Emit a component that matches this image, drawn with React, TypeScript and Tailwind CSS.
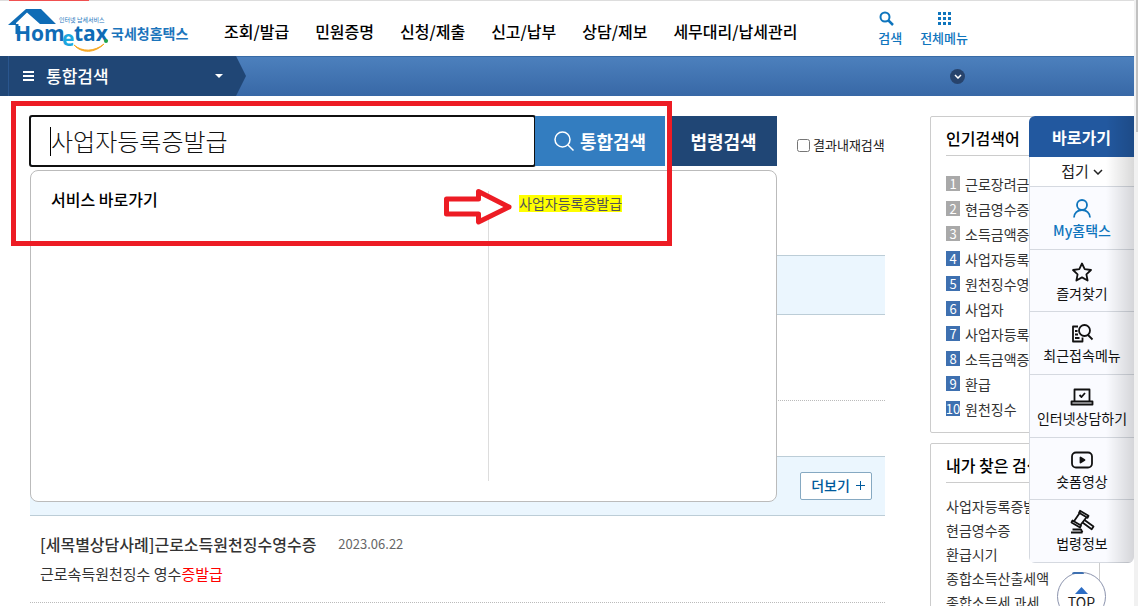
import type { ReactNode } from "react";

interface QuickItem {
  label: string;
  icon: ReactNode;
  active?: boolean;
}

const menus = ["조회/발급", "민원증명", "신청/제출", "신고/납부", "상담/제보", "세무대리/납세관리"];

const popularKeywords = [
  "근로장려금",
  "현금영수증",
  "소득금액증명",
  "사업자등록증",
  "원천징수영수증",
  "사업자",
  "사업자등록",
  "소득금액증명원",
  "환급",
  "원천징수",
];

const myKeywords = ["사업자등록증발급", "현금영수증", "환급시기", "종합소득산출세액", "종합소득세 과세"];

const quickItems: QuickItem[] = [
  {
    label: "My홈택스",
    active: true,
    icon: (
      <>
        <circle cx="12" cy="8" r="5" />
        <path d="M4 20.500c0-4.500 3.500-7.500 8-7.500s8 3 8 7.500" />
      </>
    ),
  },
  {
    label: "즐겨찾기",
    icon: <path d="M12 3.500l2.700 5.700 6.300.8-4.600 4.300 1.200 6.200-5.600-3.100-5.600 3.100 1.200-6.200L3 10l6.300-.8z" />,
  },
  {
    label: "최근접속메뉴",
    icon: (
      <>
        <path d="M8 4.500H3v15h9.500v-4M5 9h2.500M5 12.500h3M5 16h4.500" />
        <circle cx="14.500" cy="8.500" r="5.500" />
        <path d="M18 13l4.500 4.500" />
      </>
    ),
  },
  {
    label: "인터넷상담하기",
    icon: (
      <>
        <path d="M4.500 15.500v-11h15v11M1.500 16.500h21v3h-21z" />
        <path d="M9.500 10l2 2 3.500-4" />
      </>
    ),
  },
  {
    label: "숏폼영상",
    icon: (
      <>
        <rect x="2" y="4.500" width="20" height="15" rx="4" />
        <path d="M10.500 9.500v5l4-2.500z" fill="currentColor" />
      </>
    ),
  },
  {
    label: "법령정보",
    icon: (
      <>
        <path d="M10 0.800l8.500 5-1 2-8.500-5zM2.500 10.500l8.500 5-1 2-8.500-5z" />
        <path d="M9.500 3.200L4 11.300M16.500 7.300L10.500 15" />
        <path d="M14.500 10l9 6.500-1.800 2.800-9.200-6.800M1 22.500h11.500M2.500 19.500h8.500l1.500 3" />
      </>
    ),
  },
];

function Logo() {
  return (
    <svg className="h-11 w-[182px]" viewBox="0 0 182 44" role="img" aria-label="홈택스">
      <path d="M0 17L18 1h15l15 15H32L19 4.500 8 15v2z" fill="#0f6cb6" />
      <path d="M9 16v10" stroke="#0f6cb6" strokeWidth="3" />
      <text x="51" y="14" fontSize="6" fill="#1c75bc">인터넷 납세서비스</text>
      <g fontFamily="Open Sans, sans-serif" fontWeight="700" fill="#0f6cb6">
        <text x="7" y="33" fontSize="21">Hom</text>
        <text x="54" y="38" fontSize="21" fill="#1ba7e0">e</text>
        <text x="66" y="33" fontSize="21">tax</text>
      </g>
      <circle cx="98" cy="33" r="2" fill="#1fa34a" />
      <path d="M66 37c8 7 20 7 30-1-9 9-22 10-30 1z" fill="#f7a823" stroke="#f7a823" />
      <text x="103" y="31" fontSize="14" fontWeight="700" fill="#1c75bc">국세청홈택스</text>
    </svg>
  );
}

function Header() {
  return (
    <header className="flex h-14 items-start border-t border-[#ddd] bg-white pl-2">
      <a href="#home" className="mt-[7px] shrink-0">
        <Logo />
      </a>
      <nav className="ml-[34px] mt-[18px] flex gap-[26px] whitespace-nowrap text-base leading-6 font-medium text-black">
        {menus.map((menu) => (
          <a key={menu} href="#menu">{menu}</a>
        ))}
      </nav>
      <div className="ml-auto mr-[166px] mt-[9px] flex gap-[18px] whitespace-nowrap text-[13px] leading-5 font-medium text-[#0f75bd]">
        <button type="button" className="flex flex-col items-center gap-0.5">
          <svg className="mr-2 h-4 w-4" viewBox="0 0 16 16" fill="none" stroke="currentColor" strokeWidth="2">
            <circle cx="7" cy="7" r="4.500" />
            <path d="M10 10l5 5" strokeWidth="2.500" />
          </svg>
          검색
        </button>
        <button type="button" className="flex flex-col items-center gap-0.5">
          <svg className="h-4 w-4" viewBox="0 0 16 16" fill="currentColor">
            {[2, 7, 12].map((y) => [2, 7, 12].map((x) => <rect key={`${x}-${y}`} x={x} y={y} width="3" height="3" />))}
          </svg>
          전체메뉴
        </button>
      </div>
    </header>
  );
}

function MenuBar() {
  return (
    <div className="flex h-10 items-center border-t border-[#386ba6] bg-linear-to-b from-[#4c80bd] to-[#3868a6] text-white">
      <div className="-mt-px flex h-10 w-[246px] items-center bg-[#204675] [clip-path:polygon(0_0,236px_0,100%_50%,236px_100%,0_100%)]">
        <button type="button" className="ml-2 flex h-full flex-1 items-center border-l border-[#2a568e] pl-3.5 text-[17px] leading-6 font-medium">
          <svg className="mr-3 h-3 w-[11px]" viewBox="0 0 11 12" stroke="currentColor" strokeWidth="2">
            <path d="M0 2h11M0 6h11M0 10h11" />
          </svg>
          통합검색
          <svg className="ml-auto mr-[23px] h-1 w-2" viewBox="0 0 8 4" fill="currentColor">
            <path d="M0 0h8L4 4z" />
          </svg>
        </button>
      </div>
      <button type="button" aria-label="펼치기" className="ml-auto mr-[169px] flex size-[15px] items-center justify-center rounded-full bg-[#27436c]">
        <svg className="h-[5px] w-2" viewBox="0 0 8 5" fill="none" stroke="currentColor" strokeWidth="1.500">
          <path d="M1 1l3 3 3-3" />
        </svg>
      </button>
    </div>
  );
}

function SearchBar() {
  return (
    <form className="relative flex h-[50px] items-stretch">
      <input
        type="text"
        aria-label="검색어"
        defaultValue="사업자등록증발급"
        className="w-[505px] rounded-xs border border-[#337dc0] bg-white px-5 text-2xl font-light text-[#111] outline-2 -outline-offset-1 outline-[#101010]"
      />
      {/* Text cursor */}
      <span className="absolute top-[11px] left-5 h-[29px] w-px bg-black" />
      <button type="button" className="flex w-[130px] items-center justify-center gap-1.5 bg-[#337dc0] text-lg font-bold text-white">
        <svg className="size-5" viewBox="0 0 20 20" fill="none" stroke="currentColor" strokeWidth="1.500">
          <circle cx="8.500" cy="8.500" r="7.500" />
          <path d="M14 14l5.500 5.500" />
        </svg>
        통합검색
      </button>
      <button type="button" className="ml-[5px] w-[107px] bg-[#204675] text-lg font-bold text-white">
        법령검색
      </button>
      <label className="ml-5 mt-2 flex items-center gap-[3px] whitespace-nowrap text-[13px] text-[#222]">
        <input type="checkbox" className="size-[13px]" />
        결과내재검색
      </label>

      {/* Suggestion layer */}
      <div className="absolute top-[54px] left-0 z-10 grid h-[332px] w-[747px] grid-cols-[458px_1fr] rounded-lg border border-[#bbb] bg-white py-5">
        <h2 className="border-r border-[#ddd] pl-5 text-base leading-4 font-medium text-black">서비스 바로가기</h2>
        <div className="pl-[30px] pt-1 text-sm leading-[17px]">
          <a href="#service" className="inline-block bg-[#ff0] text-[#555]">사업자등록증발급</a>
        </div>
      </div>

      {/* Highlight frame and arrow */}
      <div className="pointer-events-none absolute -top-[15px] -left-[19px] z-20 h-[145px] w-[661px] border-5 border-[#ed1c24]" />
      <svg className="pointer-events-none absolute top-[71px] left-[414px] z-20 h-[38px] w-[70px]" viewBox="0 0 70 38" fill="#fff" stroke="#ed1c24" strokeWidth="5" strokeLinejoin="round">
        <path d="M2.500 12h32V4.500L65 20 34.500 35v-8h-32z" />
      </svg>
    </form>
  );
}

function Results() {
  return (
    <section className="mt-[89px]">
      <div className="h-[60px] border-y border-[#bccdd7] bg-[#ebf6fe]" />
      <div className="h-[86px] border-b border-dotted border-[#bbb]" />
      <div className="mt-[55px] flex h-[60px] items-center justify-end border-y border-[#bccdd7] bg-[#ebf6fe] pr-[13px]">
        <button type="button" className="flex h-7 w-[72px] items-center justify-center gap-1.5 rounded-xs border border-[#86a9c2] bg-white pb-0.5 pl-1 text-sm font-medium text-[#005a9c]">
          더보기
          <svg className="h-[9px] w-[9px]" viewBox="0 0 9 9" stroke="currentColor">
            <path d="M0 4.500h9M4.500 0v9" />
          </svg>
        </button>
      </div>
      <article className="h-[87px] border-b border-dotted border-[#bbb] px-2.5 pt-4">
        <div className="flex items-center gap-[22px]">
          <a href="#case" className="text-base leading-6 font-medium text-[#333]">[세목별상담사례]근로소득원천징수영수증</a>
          <time className="text-[13px] leading-6 text-[#666]">2023.06.22</time>
        </div>
        <p className="mt-2 text-[15px] leading-5 text-[#333]">
          근로속득원천징수 영수<span className="text-[#f00]">증발급</span>
        </p>
      </article>
    </section>
  );
}

function KeywordCards() {
  return (
    <aside className="w-[170px] shrink-0 whitespace-nowrap text-sm text-[#333]">
      <section className="rounded-xs border border-[#ccc] px-[15px] pb-[11px]">
        <h2 className="border-b border-[#ccc] pt-[9px] pb-[5px] text-base leading-6 font-medium text-black">인기검색어</h2>
        <ol className="mt-[15px]">
          {popularKeywords.map((keyword, i) => (
            <li key={keyword} className="flex h-[25px] items-center gap-[5px]">
              <span
                className={`flex h-[15px] w-[14px] items-center justify-center text-[13px] leading-[14px] text-white ${i < 3 ? "bg-[#a9a9a9]" : "bg-[#3e70b0]"}`}
              >
                {i + 1}
              </span>
              <a href="#keyword">{keyword}</a>
            </li>
          ))}
        </ol>
      </section>
      <section className="mt-2.5 rounded-xs border border-[#ccc] px-[15px] pb-2.5">
        <h2 className="border-b border-[#ccc] pt-[9px] pb-[5px] text-base leading-6 font-medium text-black">내가 찾은 검색어</h2>
        <ul className="mt-[11px] leading-6">
          {myKeywords.map((keyword) => (
            <li key={keyword}>
              <a href="#keyword">{keyword}</a>
            </li>
          ))}
        </ul>
      </section>
    </aside>
  );
}

function QuickMenu() {
  return (
    <div className="absolute top-[116px] right-1 z-30 w-[105px] whitespace-nowrap">
      <div className="relative overflow-hidden rounded-md rounded-tr-none bg-[#fafbff]">
        <h2 className="h-[41px] bg-[#22589f] text-center text-base leading-[42px] font-bold text-white">바로가기</h2>
        <button type="button" className="flex h-[30px] w-full items-center justify-center gap-1 border-b border-l border-[#d5d9e0] bg-white text-[15px] text-[#222]">
          접기
          <svg className="h-[6px] w-2.5" viewBox="0 0 10 6" fill="none" stroke="currentColor" strokeWidth="1.500">
            <path d="M1 1l4 4 4-4" />
          </svg>
        </button>
        <ul className="grid h-[376px] grid-rows-6 border-l border-[#d5d9e0]">
          {quickItems.map((item) => (
            <li key={item.label} className="border-b border-[#d5d9e0]">
              <a
                href="#quick"
                className={`flex h-full flex-col items-center pt-2.5 text-sm leading-[18px] ${
                  item.active ? "font-medium text-[#0f75bd]" : "text-[#111]"
                }`}
              >
                <svg className="h-6 w-6 overflow-visible" viewBox="0 0 24 24" fill="none" stroke="currentColor" strokeWidth="1.800" strokeLinejoin="round">
                  {item.icon}
                </svg>
                {item.label}
              </a>
            </li>
          ))}
        </ul>
        {/* Shade along the right edge */}
        <div className="pointer-events-none absolute inset-y-0 right-0 w-7 bg-linear-to-r from-transparent to-black/15" />
      </div>
      <button type="button" className="mx-auto mt-[9px] flex size-[49px] flex-col items-center rounded-full border border-[#8b93ad] bg-white pt-[14px] text-sm leading-4 text-[#222]">
        <svg className="h-[7px] w-[13px] shrink-0" viewBox="0 0 13 7" fill="#2b6cc4">
          <path d="M0 7l6.500-7L13 7z" />
        </svg>
        TOP
      </button>
      {/* Blue cap showing over the top button */}
      <div className="absolute top-[456px] left-[43px] h-0.5 w-3 rounded-t-xs bg-[#3e70b0]" />
    </div>
  );
}

export default function App() {
  return (
    <div className="relative h-screen overflow-hidden bg-white pr-1 font-['Noto_Sans_CJK_KR',sans-serif]">
      <div className="absolute top-0 left-[9px] h-px w-20 bg-[#f05050]" />
      <Header />
      <MenuBar />
      <main className="flex justify-start gap-[45px] pt-5 pl-[30px]">
        <div className="w-[855px] shrink-0">
          <SearchBar />
          <Results />
        </div>
        <KeywordCards />
      </main>
      <QuickMenu />
      {/* Scrollbar */}
      <div className="absolute inset-y-0 right-0 w-1 bg-[#f1f1f1]">
        <div className="ml-auto h-[132px] w-0.5 bg-[#c1c1c1]" />
      </div>
    </div>
  );
}
